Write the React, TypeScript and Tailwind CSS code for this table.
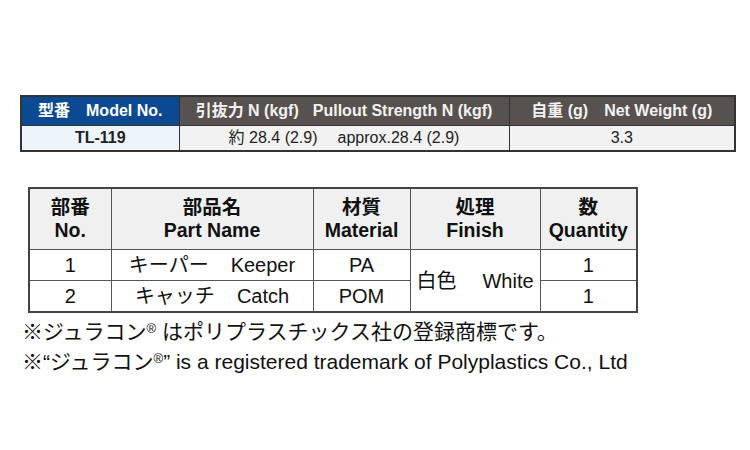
const font = { fontFamily: '"Liberation Sans", "Noto Sans CJK JP", sans-serif' };

const partRows = [
  { no: '1', jp: 'キーパー', en: 'Keeper', material: 'PA' },
  { no: '2', jp: 'キャッチ', en: 'Catch', material: 'POM' },
];

const SpecTable = () => (
  <table className="table-fixed border-collapse border-2 border-[#333] w-[714px] ml-[20px]">
    <colgroup>
      <col className="w-[158px]" />
      <col className="w-[330px]" />
      <col className="w-[226px]" />
    </colgroup>
    <thead>
      <tr className="h-[29px] text-[16px] font-bold text-white">
        <th className="bg-[#0b4a93] border border-[#333] font-bold">
          型番<span className="ml-[16px]">Model No.</span>
        </th>
        <th className="bg-[#57524f] border border-[#333] font-bold text-[#f2f2f2]">
          引抜力 N (kgf)<span className="ml-[14px]">Pullout Strength N (kgf)</span>
        </th>
        <th className="bg-[#57524f] border border-[#333] font-bold text-[#f2f2f2]">
          自重 (g)<span className="ml-[16px]">Net Weight (g)</span>
        </th>
      </tr>
    </thead>
    <tbody>
      <tr className="h-[25px] text-[16px] text-[#222]">
        <td className="bg-[#eef4fb] border border-[#333] text-center font-bold">TL-119</td>
        <td className="bg-[#f2f2f2] border border-[#333] text-center">
          約 28.4 (2.9)<span className="ml-[20px]">approx.28.4 (2.9)</span>
        </td>
        <td className="bg-[#f2f2f2] border border-[#333] text-center">3.3</td>
      </tr>
    </tbody>
  </table>
);

const PartsTable = () => (
  <table className="table-fixed border-collapse border-2 border-[#444] w-[608px] ml-[28px] text-[#111]">
    <colgroup>
      <col className="w-[82px]" />
      <col className="w-[202px]" />
      <col className="w-[97px]" />
      <col className="w-[130px]" />
      <col className="w-[97px]" />
    </colgroup>
    <thead>
      <tr className="h-[62px] bg-[#f0f0f0] text-[19.5px] leading-[23px]">
        <th className="border border-[#555] font-bold">部番<br />No.</th>
        <th className="border border-[#555] font-bold">部品名<br />Part Name</th>
        <th className="border border-[#555] font-bold">材質<br />Material</th>
        <th className="border border-[#555] font-bold">処理<br />Finish</th>
        <th className="border border-[#555] font-bold">数<br />Quantity</th>
      </tr>
    </thead>
    <tbody className="text-[20px] bg-white">
      {partRows.map((r, i) => (
        <tr key={r.no} className={i === 0 ? 'h-[31px]' : 'h-[29px]'}>
          <td className="border border-[#555] text-center">{r.no}</td>
          <td className="border border-[#555] text-center">
            {r.jp}<span className="ml-[22px]">{r.en}</span>
          </td>
          <td className="border border-[#555] text-center">{r.material}</td>
          {i === 0 && (
            <td rowSpan={2} className="border border-[#555] text-center">
              白色<span className="ml-[26px]">White</span>
            </td>
          )}
          <td className="border border-[#555] text-center">1</td>
        </tr>
      ))}
    </tbody>
  </table>
);

export default function App() {
  return (
    <div className="w-[750px] h-[450px] bg-white pt-[95px]" style={font}>
      <SpecTable />
      <div className="mt-[35px]">
        <PartsTable />
      </div>
      <div className="mt-[4px] ml-[22px] text-[21px] leading-[30px] text-[#111]">
        <p>
          ※ジュラコン<sup className="text-[13px]">®</sup> はポリプラスチックス社の登録商標です。
        </p>
        <p>
          ※“ジュラコン<sup className="text-[13px]">®</sup>” is a registered trademark of Polyplastics Co., Ltd
        </p>
      </div>
    </div>
  );
}
